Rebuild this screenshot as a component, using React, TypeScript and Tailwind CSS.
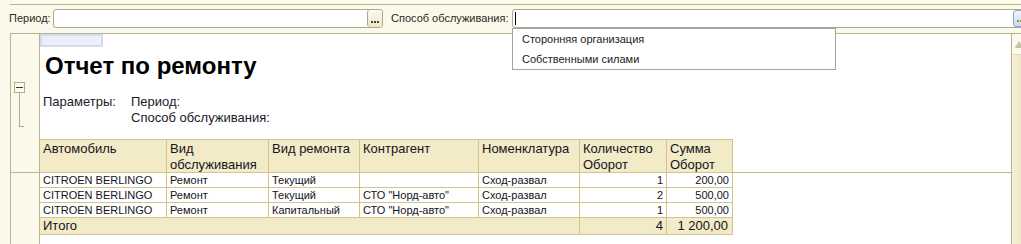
import { ReactNode } from 'react';

const rows = [
	{ car: 'CITROEN BERLINGO', kind: 'Ремонт', type: 'Текущий', agent: '', item: 'Сход-развал', qty: '1', sum: '200,00' },
	{ car: 'CITROEN BERLINGO', kind: 'Ремонт', type: 'Текущий', agent: 'СТО "Норд-авто"', item: 'Сход-развал', qty: '2', sum: '500,00' },
	{ car: 'CITROEN BERLINGO', kind: 'Ремонт', type: 'Капитальный', agent: 'СТО "Норд-авто"', item: 'Сход-развал', qty: '1', sum: '500,00' },
];

function Dots({ color }: { color: string }) {
	return (
		<div className="flex h-full items-end justify-center gap-[1px] pb-[4px]">
			<span className={`w-[2px] h-[2px] ${color}`} />
			<span className={`w-[2px] h-[2px] ${color}`} />
			<span className={`w-[2px] h-[2px] ${color}`} />
		</div>
	);
}

function HeadCell({ children }: { children?: ReactNode }) {
	return (
		<div className="h-[34px] border-t border-b border-r border-[#d2c48f] bg-[#f3eac8] pl-[3px] pt-px text-[13px] leading-[16px]">
			{children}
		</div>
	);
}

function Cell({ children, right }: { children?: ReactNode; right?: boolean }) {
	return (
		<div
			className={`h-[15px] border-b border-r border-[#d2c48f] px-[3px] text-[11px] leading-[14px] whitespace-nowrap overflow-hidden ${
				right ? 'text-right' : ''
			}`}>
			{children}
		</div>
	);
}

export default function App() {
	return (
		<div className="w-[1021px] h-[244px] overflow-hidden bg-[#fbf9ea] flex flex-col font-['Liberation_Sans',Arial,sans-serif] text-[#1c1c1c]">
			<div className="h-[4px] shrink-0" />
			<div className="ml-[10px] h-px shrink-0 bg-[#bbb290]" />

			{/* filter bar */}
			<div className="relative mt-[4px] h-[19px] shrink-0 flex text-[11px] leading-[19px]">
				<span className="w-[53px] shrink-0 pl-[9px] text-[#2a2a22]">Период:</span>
				<div className="w-[330px] shrink-0 flex rounded-[3px] border border-[#aca78e] bg-white overflow-hidden">
					<div className="flex-1" />
					<div className="w-[15px] rounded-[3px] border-l border-[#aca78e] bg-gradient-to-b from-[#fdfbf1] to-[#ece6cc]">
						<Dots color="bg-[#4d4522]" />
					</div>
				</div>
				<span className="w-[129px] shrink-0 pl-[8px] text-[#2a2a22] whitespace-nowrap">Способ обслуживания:</span>
				<div className="w-[518px] shrink-0 flex rounded-[3px] border border-[#aca78e] bg-white">
					<div className="flex-1 pl-[2px] pt-[2px]">
						<div className="w-px h-[13px] bg-black" />
					</div>
					<div className="w-[16px] rounded-[3px] border border-[#8ea4cc] bg-gradient-to-b from-[#eef4fd] to-[#c9d9f2]">
						<Dots color="bg-[#a88a22]" />
					</div>
				</div>

				<div className="absolute left-[512px] top-[19px] z-10 w-[324px] h-[42px] border border-[#a3a3a3] bg-white text-[11px] text-[#1c1c1c]">
					<div className="h-[20px] leading-[20px] pl-[9px]">Сторонняя организация</div>
					<div className="h-[20px] leading-[20px] pl-[9px]">Собственными силами</div>
				</div>
			</div>

			{/* report */}
			<div className="mt-[5px] ml-[10px] flex-1 flex border-t border-l border-[#bbb290]">
				<div className="w-[29px] shrink-0 border-r border-[#bbb290]">
					<div className="h-[139px] border-b border-[#bbb290] pt-[48px] pl-[3px]">
						<div className="w-[11px] h-[11px] border border-[#b5ab84] bg-[#fdfbf0] flex items-center justify-center">
							<div className="w-[7px] h-px bg-[#3a3520]" />
						</div>
						<div className="ml-[5px] w-[5px] h-[34px] border-l border-b border-[#b5ab84]" />
					</div>
				</div>

				<div className="flex-1 flex flex-col bg-white">
					<div className="w-[63px] h-[13px] shrink-0 border-2 border-[#d5dbef] bg-[#eceef8]" />
					<div className="mt-[5px] pl-[5px] text-[24px] leading-[28px] font-bold text-black">Отчет по ремонту</div>

					<div className="mt-[14px] pl-[3px] grid grid-cols-[88px_auto] text-[13px] leading-[16px] text-[#1a1a2a]">
						<span>Параметры:</span>
						<span>Период:</span>
						<span />
						<span>Способ обслуживания:</span>
					</div>

					<div className="mt-[13px] grid grid-cols-[127px_102px_91px_119px_101px_87px_66px_1fr] text-[#141420]">
						<HeadCell>Автомобиль</HeadCell>
						<HeadCell>
							Вид
							<br />
							обслуживания
						</HeadCell>
						<HeadCell>Вид ремонта</HeadCell>
						<HeadCell>Контрагент</HeadCell>
						<HeadCell>Номенклатура</HeadCell>
						<HeadCell>
							Количество
							<br />
							Оборот
						</HeadCell>
						<HeadCell>
							Сумма
							<br />
							Оборот
						</HeadCell>
						<div className="h-[34px] border-b border-[#bbb290]" />

						{rows.map((r, i) => (
							<div key={i} className="contents">
								<Cell>{r.car}</Cell>
								<Cell>{r.kind}</Cell>
								<Cell>{r.type}</Cell>
								<Cell>{r.agent}</Cell>
								<Cell>{r.item}</Cell>
								<Cell right>{r.qty}</Cell>
								<Cell right>{r.sum}</Cell>
								<div />
							</div>
						))}

						<div className="col-span-5 h-[17px] border-b border-r border-[#d2c48f] bg-[#f3eac8] pl-[3px] text-[13px] leading-[16px]">
							Итого
						</div>
						<div className="h-[17px] border-b border-r border-[#d2c48f] bg-[#f3eac8] pr-[3px] text-right text-[13px] leading-[16px]">
							4
						</div>
						<div className="h-[17px] border-b border-r border-[#d2c48f] bg-[#f3eac8] pr-[4px] text-right text-[13px] leading-[16px]">
							1 200,00
						</div>
						<div />
					</div>
				</div>

				<div className="w-[10px] shrink-0 border-l border-[#bbb290] bg-gradient-to-r from-[#f7f1da] to-[#efe7c8]">
					<div className="h-[21px] border-b border-[#e2d9b4] bg-[#fbf8ec] pl-[3px] pt-[7px]">
						<svg width="8" height="7" viewBox="0 0 8 7">
							<path d="M4 0 L8 7 L0 7 Z" fill="#c9c1a2" />
						</svg>
					</div>
				</div>
			</div>
		</div>
	);
}
